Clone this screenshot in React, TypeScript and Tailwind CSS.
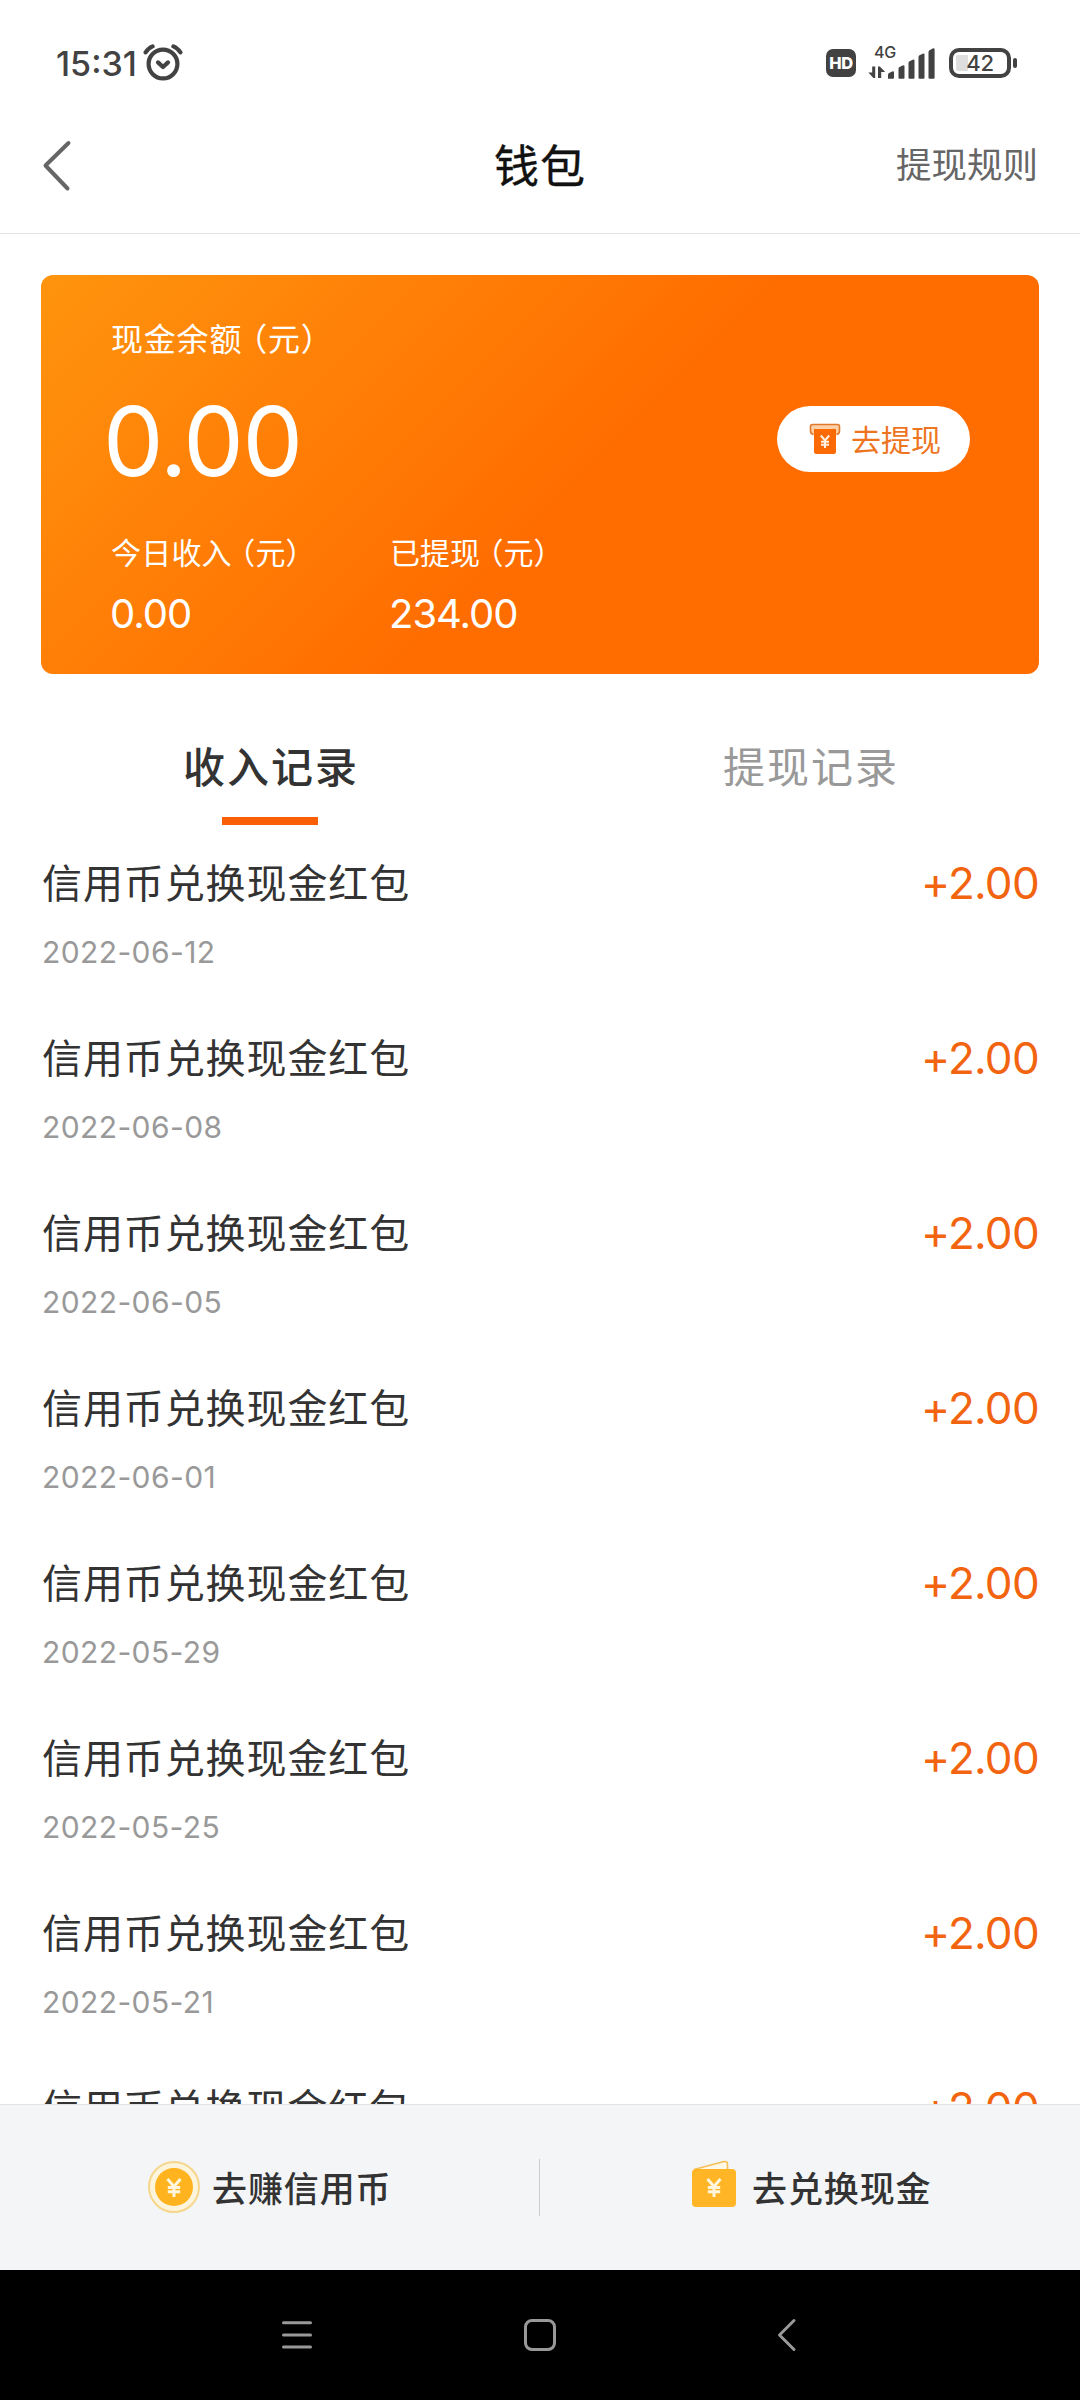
import React from 'react';

const records = [
  '2022-06-12',
  '2022-06-08',
  '2022-06-05',
  '2022-06-01',
  '2022-05-29',
  '2022-05-25',
  '2022-05-21',
  '2022-05-18',
];

const cjk = "font-['Noto_Sans_CJK_SC',sans-serif]";
const num = "font-['Inter',sans-serif]";

function AlarmIcon() {
  return (
    <svg width="40" height="38" viewBox="0 0 40 38" fill="none" stroke="#424242" strokeLinecap="round">
      <circle cx="20" cy="21" r="14.4" strokeWidth="4.2" />
      <path d="M15 19.4l5 4.6 5-4.6" strokeWidth="4.200" strokeLinejoin="round" />
      <path d="M2.6 9.4Q5.4 5 9.6 3.4M37.4 9.4Q34.6 5 30.4 3.4" strokeWidth="4.2" />
    </svg>
  );
}

function SignalIcon() {
  return (
    <svg width="68" height="34" viewBox="0 0 68 34" fill="#424242">
      <path d="M4.2 21.500h3V33h-1.800L.4 27.6h3.800zM10 33V21.500h1.800l5.400 5.400h-4V33z" />
      <path d="M20 33.7v-4q0-1.5 1.6-2l2.6-1.2q1.8-.8 1.8 1v5q0 1.2-1.2 1.2z" />
      <path d="M30.500 32.700v-9q0-1.2 1-1.700l3.200-1.500q1.800-.8 1.800.9v11.300q0 1-1 1h-4q-1 0-1-1z" />
      <path d="M40.500 32.700V18q0-1.2 1-1.700l3.200-1.500q1.800-.8 1.800.9v17q0 1-1 1h-4q-1 0-1-1z" />
      <path d="M50.500 32.700V12q0-1.2 1-1.700l3.200-1.500q1.800-.8 1.800.9v23q0 1-1 1h-4q-1 0-1-1z" />
      <path d="M60.500 32.700V7q0-1.2 1-1.700l3.200-1.700q1.900-.8 1.900.9v28.200q0 1-1 1h-4.100q-1 0-1-1z" />
    </svg>
  );
}

function StatusBar() {
  return (
    <div className="flex h-[127px] items-start justify-between pt-[40px] pr-[63px] pl-[56px] text-[#424242]">
      <div className="flex h-12 items-center">
        <span className={`${num} w-[87px] text-[34px] leading-12 font-medium`}>15:31</span>
        <span className="-mt-1">
          <AlarmIcon />
        </span>
      </div>
      <div className="flex items-start">
        <div className={`${num} mt-[9px] flex h-7 w-[30px] items-center justify-center rounded-[7px] bg-[#424242] text-[16.500px] font-extrabold tracking-[-0.5px] text-white`}>
          HD
        </div>
        <div className="relative mt-[5px] ml-[12px] h-[34px] w-[68px]">
          <SignalIcon />
          <span className={`${num} absolute top-0 left-[6px] text-[16px] leading-[15px] font-medium tracking-[-0.3px]`}>4G</span>
        </div>
        <div className="mt-[8px] ml-[13px] flex items-center">
          <div className="relative flex h-[30px] w-[62px] items-center justify-center rounded-[10px] border-[4.500px] border-[#424242]">
            <span className="absolute top-[3px] left-[3px] h-4 w-3 rounded-l-[2px] bg-[#dedede]" />
            <span className={`${num} relative text-[22px] leading-6 font-medium tracking-[-0.3px]`}>42</span>
          </div>
          <span className="ml-[2px] h-[10px] w-1 rounded-[2px] bg-[#424242]" />
        </div>
      </div>
    </div>
  );
}

function Header() {
  return (
    <div className="grid h-[107px] grid-cols-[1fr_auto_1fr] items-start border-b border-[#e5e5e5] pr-[42px] pl-[42px]">
      <svg className="mt-[13px]" width="30" height="52" viewBox="0 0 30 52" fill="none" stroke="#666" strokeWidth="4" strokeLinecap="round" strokeLinejoin="round">
        <path d="M26.500 3L3.500 25.500 25.500 48.500" />
      </svg>
      <div className={`${cjk} mt-[7px] text-[45px] leading-[60px] tracking-[1px] text-[#111] [-webkit-text-stroke:0.4px_#111]`}>钱包</div>
      <div className={`${cjk} mt-[6px] text-right text-[35.500px] leading-[60px] text-[#666]`}>提现规则</div>
    </div>
  );
}

function WithdrawIcon() {
  return (
    <svg width="32" height="32" viewBox="0 0 32 32">
      <path d="M4.500 11.500Q1.500 11 1.500 8V3.500Q1.500 1.500 3.500 1.500h25Q30.500 1.500 30.500 3.500V8q0 3-3 3.500" fill="#fdd0a6" stroke="#e07a2c" strokeWidth="1.600" />
      <path d="M5 6h22v22.500q0 2.500-2.500 2.500h-17Q5 31 5 28.500z" fill="#fb6a04" />
      <path d="M11.800 12.500L16 17.500l4.200-5M16 17.500V25M12 18.700h8M12 21.700h8" fill="none" stroke="#fff1e2" strokeWidth="2" />
    </svg>
  );
}

/* Currency unit with the opening bracket narrowed to three quarters of an em. */
function Unit() {
  return (
    <>
      <span className="ml-[0.28em] [font-feature-settings:'halt']">（</span>元）
    </>
  );
}

function BalanceCard() {
  return (
    <div className="mx-[41px] mt-[41px] flex h-[399px] items-start justify-between rounded-[12px] bg-[linear-gradient(135deg,#ff940e_0%,#ff6c00_55%)] pr-[69px] pl-[70px] text-white">
      <div>
        <div className={`${cjk} mt-[37px] text-[32px] leading-[50px] tracking-[0.8px]`}>
          现金余额
          <Unit />
        </div>
        <div className={`${num} mt-[29px] -ml-[8px] text-[96px] leading-[100px] tracking-[-1.500px]`}>0.00</div>
        <div className="mt-[35px] flex">
          <div className="w-[279px]">
            <div className={`${cjk} text-[30px] leading-[50px] tracking-[0.200px]`}>
              今日收入
              <Unit />
            </div>
            <div className={`${num} mt-[13px] -ml-px text-[40px] leading-[50px] tracking-[-1px]`}>0.00</div>
          </div>
          <div>
            <div className={`${cjk} text-[30px] leading-[50px]`}>
              已提现
              <Unit />
            </div>
            <div className={`${num} mt-[13px] -ml-px text-[40px] leading-[50px] tracking-[-1px]`}>234.00</div>
          </div>
        </div>
      </div>
      <button className="mt-[131px] flex h-[66px] w-[193px] items-center rounded-full bg-white pl-[32px]">
        <WithdrawIcon />
        <span className={`${cjk} -mt-[3px] ml-[10px] text-[30px] leading-[50px] text-[#ee751f]`}>去提现</span>
      </button>
    </div>
  );
}

function Tabs() {
  return (
    <div className="grid h-[151px] grid-cols-2 pt-[61px] text-center">
      <div className={`${cjk} flex flex-col items-center text-[42px] leading-[60px] font-medium text-[#333]`}>
        <span className="ml-[2px] tracking-[2px]">收入记录</span>
        <span className="mt-[22px] h-2 w-24 bg-[#fb5f05]" />
      </div>
      <div className={`${cjk} ml-[2px] text-[42px] leading-[60px] tracking-[2px] text-[#999]`}>提现记录</div>
    </div>
  );
}

function RecordRow({ date }: { date: string }) {
  return (
    <div className="flex h-[175px] shrink-0 items-start justify-between">
      <div>
        <div className={`${cjk} text-[40px] leading-[60px] tracking-[0.900px] text-[#333]`}>信用币兑换现金红包</div>
        <div className={`${num} mt-[16px] text-[30px] leading-[50px] tracking-[0.400px] text-[#999]`}>{date}</div>
      </div>
      <div className={`${num} mt-[2px] text-[44px] leading-[60px] tracking-[-0.700px] text-[#f2640f]`}>+2.00</div>
    </div>
  );
}

function CoinIcon() {
  return (
    <svg width="54" height="54" viewBox="0 0 54 54">
      <circle cx="27" cy="27" r="25" fill="#fdf4dc" stroke="#f5d68c" strokeWidth="2" />
      <circle cx="27" cy="27" r="19" fill="#ffb41f" />
      <path d="M20.500 19L27 26.500 33.500 19M27 26.500V37M20.800 27.500h12.400M20.800 31.800h12.400" fill="none" stroke="#fff6dd" strokeWidth="3" />
    </svg>
  );
}

function WalletIcon() {
  return (
    <svg width="46" height="48" viewBox="0 0 46 48">
      <path d="M3 9.500L33 1.600q3.500-.8 3.500 2.400V10" fill="#fff8e6" stroke="#f5bf55" strokeWidth="1.600" />
      <rect x="1" y="9" width="44" height="38" rx="4" fill="#ffb526" />
      <path d="M16.500 19L23 26.500 29.500 19M23 26.500V37M16.800 27.500h12.400M16.800 31.800h12.400" fill="none" stroke="#fff6dd" strokeWidth="3" />
    </svg>
  );
}

function ActionBar() {
  return (
    <div className="flex h-[166px] items-start border-t border-[#e2e3e5] bg-[#f4f5f7]">
      <div className="flex w-[539px] items-start pt-[55px] pl-[147px]">
        <CoinIcon />
        <span className={`${cjk} ml-[11px] text-[35px] leading-[54px] font-medium tracking-[0.900px] text-[#333]`}>去赚信用币</span>
      </div>
      <span className="mt-[54px] h-[57px] w-px bg-[#ccc]" />
      <div className="flex items-start pt-[55px] pl-[151px]">
        <WalletIcon />
        <span className={`${cjk} ml-[15px] text-[35px] leading-[54px] font-medium tracking-[0.900px] text-[#333]`}>去兑换现金</span>
      </div>
    </div>
  );
}

function SystemNav() {
  return (
    <div className="flex h-[130px] items-start bg-black pt-[48px] pl-[280px]">
      <svg width="34" height="34" viewBox="0 0 34 34" stroke="#999" strokeWidth="3" strokeLinecap="round">
        <path d="M3.500 4.700h27M3.500 16.900h27M3.500 28.900h27" />
      </svg>
      <svg className="ml-[209px]" width="34" height="34" viewBox="0 0 34 34" fill="none" stroke="#999" strokeWidth="3">
        <rect x="2.500" y="2.500" width="29" height="29" rx="6.500" />
      </svg>
      <svg className="ml-[219px]" width="22" height="34" viewBox="0 0 22 34" fill="none" stroke="#999" strokeWidth="3" strokeLinecap="round" strokeLinejoin="round">
        <path d="M18 2.500L3.500 17 18 31.500" />
      </svg>
    </div>
  );
}

export default function App() {
  return (
    <div className="flex h-[2400px] w-[1080px] flex-col overflow-hidden bg-white">
      <StatusBar />
      <Header />
      <BalanceCard />
      <Tabs />
      <div className="flex min-h-0 flex-1 flex-col overflow-hidden pt-[26px] pr-[41px] pl-[42px]">
        {records.map((date) => (
          <RecordRow key={date} date={date} />
        ))}
      </div>
      <ActionBar />
      <SystemNav />
    </div>
  );
}
